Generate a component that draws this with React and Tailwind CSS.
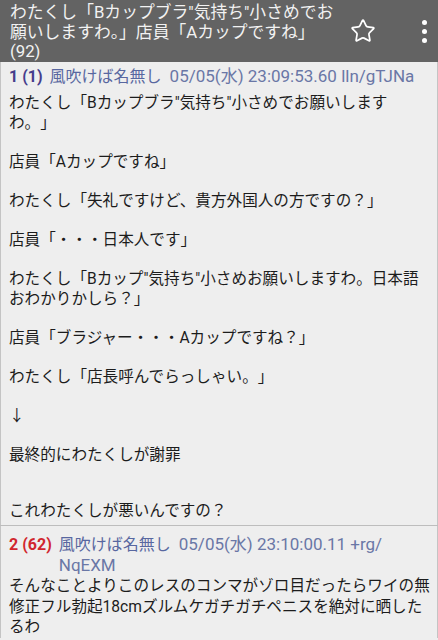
import { Star } from 'lucide-react';

const font = { fontFamily: 'Roboto, "Noto Sans CJK JP", sans-serif' };

function PostHead({ num, count, numColor, name, date, id, lh }) {
  return (
    <div className={`flex items-start gap-[7px] pr-[8px] text-[16px] ${lh}`}>
      <span className={`font-bold shrink-0 ${numColor}`}>{num} ({count})</span>
      <span className="text-[#5867a0]">
        <span className="mr-[8px]">{name}</span>
        <span className="text-[17px] text-[#6a77a6]">{date} {id}</span>
      </span>
    </div>
  );
}

export default function App() {
  const paras = [
    'わたくし「Bカップブラ"気持ち"小さめでお願いしますわ。」',
    '店員「Aカップですね」',
    'わたくし「失礼ですけど、貴方外国人の方ですの？」',
    '店員「・・・日本人です」',
    'わたくし「Bカップ"気持ち"小さめお願いしますわ。日本語おわかりかしら？」',
    '店員「ブラジャー・・・Aカップですね？」',
    'わたくし「店長呼んでらっしゃい。」',
    '↓',
    '最終的にわたくしが謝罪',
  ];

  return (
    <div className="w-[438px] h-[640px] overflow-hidden bg-[#eeeeee]" style={font}>
      {/* title bar */}
      <div className="h-[62px] bg-[#636363] flex pl-[10px]">
        <div className="w-[330px] pt-[3px] text-[16.8px] leading-[19.5px] text-[#f2f2f2]">
          わたくし「Bカップブラ"気持ち"小さめでお願いしますわ。」店員「Aカップですね」(92)
        </div>
        <div className="flex-1 flex items-center justify-end pr-[11px] gap-[46px]">
          <Star size={26} strokeWidth={1.6} className="text-white" />
          <div className="flex flex-col gap-[4px] items-center">
            <span className="w-[5px] h-[5px] rounded-full bg-white" />
            <span className="w-[5px] h-[5px] rounded-full bg-white" />
            <span className="w-[5px] h-[5px] rounded-full bg-white" />
          </div>
        </div>
      </div>

      {/* post 1 */}
      <div className="border-x border-[#c4c4c4] pl-[8px] pr-[3px] pt-[3px] pb-[4px]">
        <PostHead
          num="1"
          count="1"
          numColor="text-[#463d8c]"
          name="風吹けば名無し"
          date="05/05(水) 23:09:53.60"
          id="lln/gTJNa"
          lh="leading-[23px]"
        />
        <div className="mt-[5px] text-[15.6px] leading-[20px] text-[#1c1c1c] [text-spacing-trim:space-all]">
          {paras.map((p, i) => (
            <p key={i} className={i === 0 ? '' : 'mt-[19px]'}>{p}</p>
          ))}
          <p className="mt-[36px]">これわたくしが悪いんですの？</p>
        </div>
      </div>

      <div className="h-px bg-[#bdbdbd]" />

      {/* post 2 */}
      <div className="border-x border-[#c4c4c4] pl-[8px] pr-[3px] pt-[8px]">
        <PostHead
          num="2"
          count="62"
          numColor="text-[#d1262e]"
          name="風吹けば名無し"
          date="05/05(水) 23:10:00.11"
          id={<>+rg/<wbr />NqEXM</>}
          lh="leading-[21px]"
        />
        <div className="text-[15.6px] leading-[20.5px] text-[#1c1c1c] [text-spacing-trim:space-all]">
          そんなことよりこのレスのコンマがゾロ目だったらワイの無修正フル勃起18cmズルムケガチガチペニスを絶対に晒したるわ
        </div>
      </div>
    </div>
  );
}
